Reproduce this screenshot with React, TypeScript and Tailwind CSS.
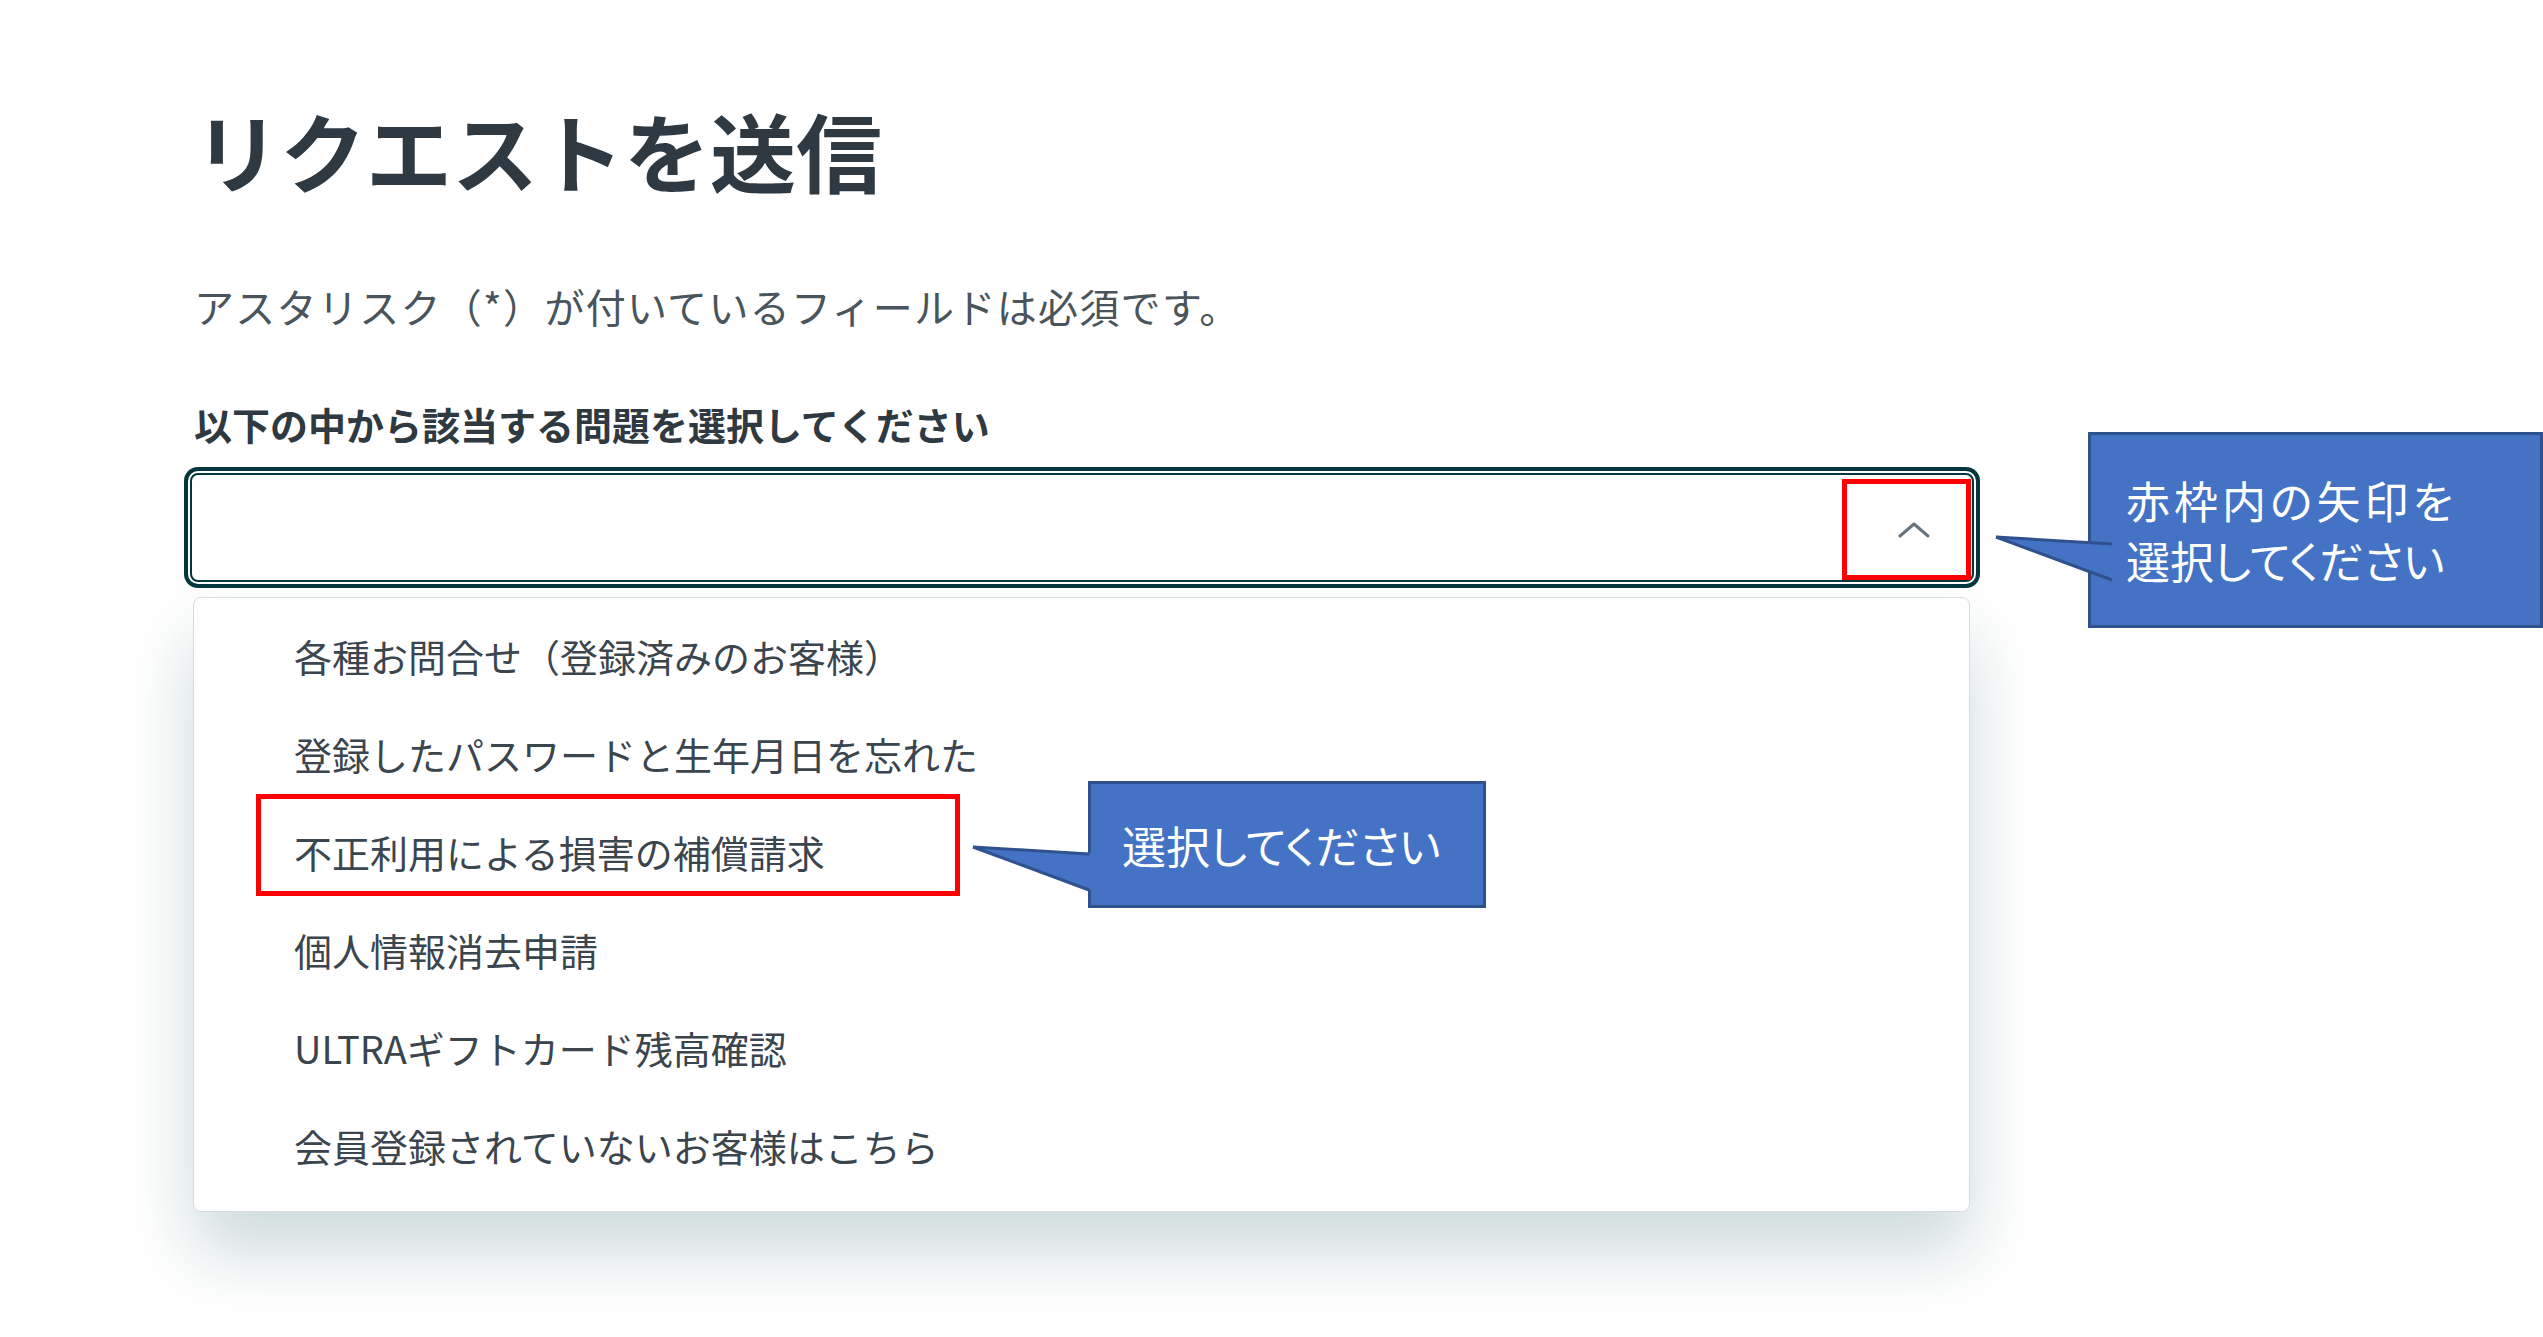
import React from "react";

const options = [
  "各種お問合せ（登録済みのお客様）",
  "登録したパスワードと生年月日を忘れた",
  "不正利用による損害の補償請求",
  "個人情報消去申請",
  "ULTRAギフトカード残高確認",
  "会員登録されていないお客様はこちら",
];

function Tail({ className }: { className: string }) {
  // callout pointer: filled wedge plus the two outer edges
  return (
    <svg className={className} viewBox="0 0 130 60" width="130" height="60">
      <polygon points="7,9 127,15 127,53 7,9" fill="#4472c4" />
      <line x1="7" y1="9" x2="123" y2="16" stroke="#2f528f" strokeWidth="3" />
      <line x1="7" y1="9" x2="123" y2="52" stroke="#2f528f" strokeWidth="3" />
    </svg>
  );
}

export default function App() {
  return (
    <main
      className="relative w-full h-[1337px] overflow-hidden bg-white"
      style={{ fontFamily: '"Noto Sans CJK JP", "Noto Sans", sans-serif' }}
    >
      <div className="flex flex-col pl-[190px] pt-[100px]">
        <h1 className="pl-[4px] text-[86px] leading-[100px] font-bold text-[#2f3941]">
          リクエストを送信
        </h1>
        <p className="mt-[81px] pl-[4px] text-[40px] leading-[50px] tracking-[1.3px] text-[#49545c]">
          アスタリスク（*）が付いているフィールドは必須です。
        </p>
        <label className="mt-[68px] pl-[4px] text-[38px] leading-[50px] font-bold text-[#2f3941]">
          以下の中から該当する問題を選択してください
        </label>

        <div className="relative mt-[24px] w-[1784px] h-[109px] rounded-[8px] border-2 border-[#03363d] bg-white shadow-[0_0_0_2px_#ffffff,0_0_0_6px_#03363d] flex items-center justify-end pr-[42px]">
          <svg width="32" height="16" viewBox="0 0 32 16" className="mt-[4px]">
            <polyline
              points="2,14 16,2 30,14"
              fill="none"
              stroke="#68737d"
              strokeWidth="3"
              strokeLinecap="round"
              strokeLinejoin="round"
            />
          </svg>
          <div className="absolute top-[4px] right-[1px] w-[129px] h-[101px] border-[5px] border-[#ff0000]" />
        </div>

        <ul className="mt-[15px] ml-[3px] w-[1777px] rounded-[8px] border border-[#d8dcde] bg-white pt-[8px] pb-[17px] shadow-[0_40px_70px_0_rgba(4,68,77,0.2)]">
          {options.map((o, i) => (
            <li
              key={o}
              className="relative flex h-[98px] items-center pl-[100px] text-[38px] text-[#3b454e]"
            >
              {o}
              {i === 2 && (
                <div className="absolute left-[62px] top-[-8px] w-[704px] h-[102px] border-[5px] border-[#ff0000]" />
              )}
            </li>
          ))}
        </ul>
      </div>

      <div className="absolute left-[1088px] top-[781px] w-[398px] h-[127px] border-[3px] border-[#2f528f] bg-[#4472c4] flex items-center pl-[31px] text-[44px] [font-feature-settings:'palt'] text-white">
        選択してください
      </div>
      <Tail className="absolute left-[966px] top-[838px]" />

      <div className="absolute left-[2088px] top-[432px] w-[455px] h-[196px] border-[3px] border-[#2f528f] bg-[#4472c4] flex flex-col justify-center pl-[35px] text-[44px] leading-[60px] [font-feature-settings:'palt'] text-white">
        <span className="tracking-[4px]">赤枠内の矢印を</span>
        <span>選択してください</span>
      </div>
      <Tail className="absolute left-[1989px] top-[528px]" />
    </main>
  );
}
